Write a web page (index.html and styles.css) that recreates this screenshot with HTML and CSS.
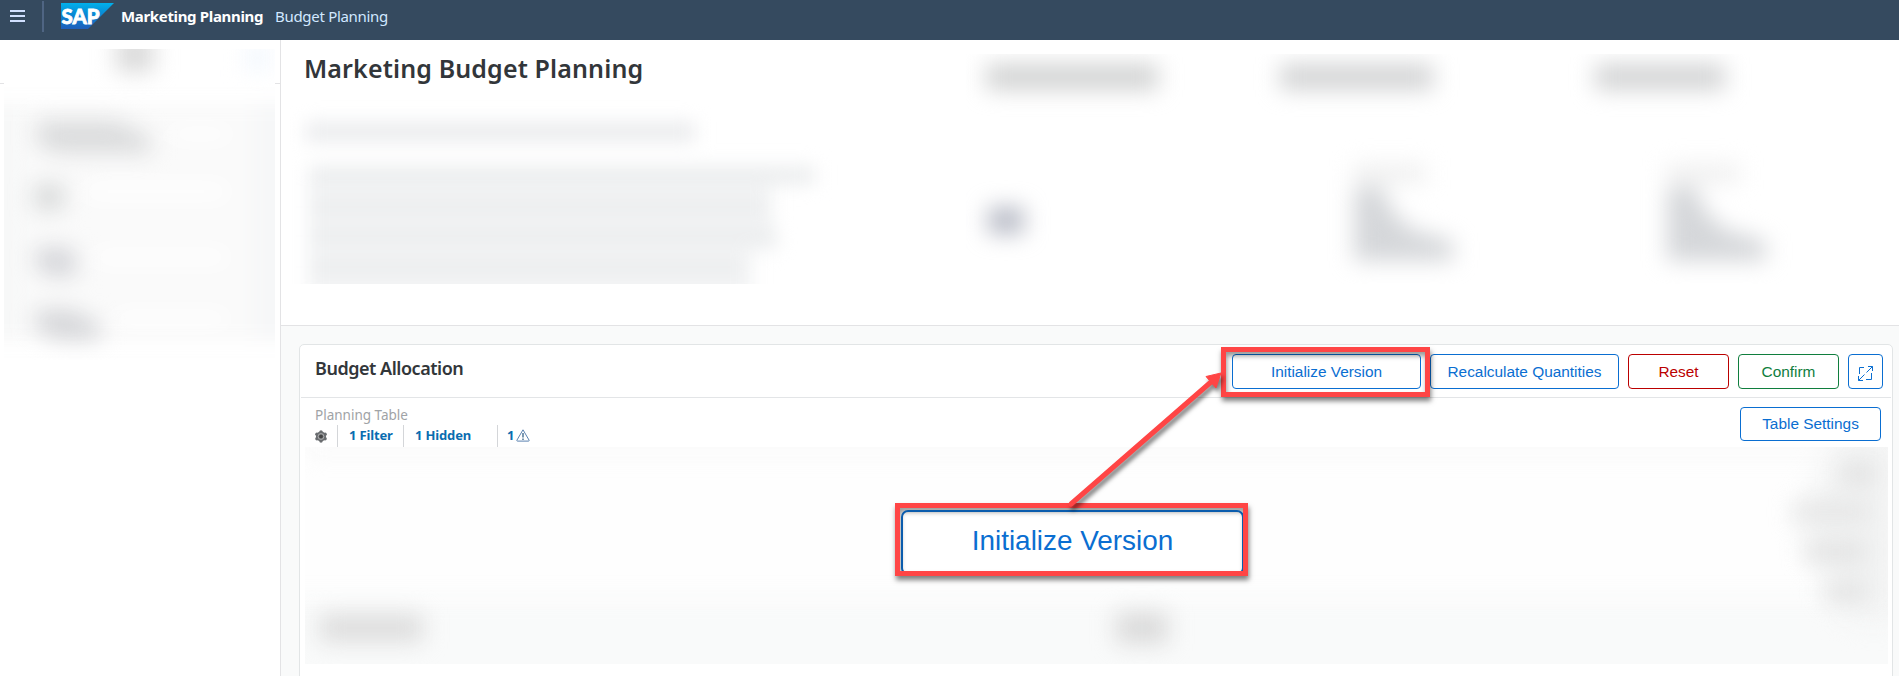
FILE: index.html
```html
<!DOCTYPE html>
<html lang="en">
<head>
<meta charset="utf-8">
<title>Marketing Budget Planning</title>
<link rel="stylesheet" href="styles.css">
</head>
<body>
<header class="shell">
  <svg class="menu" width="15" height="12" viewBox="0 0 15 12"><path d="M0 1h15M0 6h15M0 11h15" stroke="#d1e0ff" stroke-width="2"/></svg>
  <span class="shell-sep"></span>
  <svg class="logo" width="53" height="26" viewBox="0 0 53 26">
    <defs><linearGradient id="sap" x1="0" y1="0" x2="0" y2="1"><stop offset="0" stop-color="#00b1eb"/><stop offset=".5" stop-color="#0b82d0"/><stop offset="1" stop-color="#1e5fbb"/></linearGradient></defs>
    <path d="M0 0h53L27 26H0z" fill="url(#sap)"/>
    <text x="0.5" y="20.5" textLength="38" lengthAdjust="spacingAndGlyphs" class="logo-text">SAP</text>
  </svg>
  <span class="product">Marketing Planning</span>
  <span class="crumb">Budget Planning</span>
</header>
<div class="body">
  <aside class="side">
    <svg class="side-redacted" width="271" height="311" viewBox="4 49 271 311">
      <defs>
        <filter id="b10" x="-100%" y="-200%" width="300%" height="500%"><feGaussianBlur stdDeviation="10"/></filter>
        <filter id="b8" x="-100%" y="-200%" width="300%" height="500%"><feGaussianBlur stdDeviation="11"/></filter>
      </defs>
      <rect x="4" y="49" width="271" height="311" fill="#fff"/>
      <g filter="url(#b10)">
        <rect x="-30" y="104" width="340" height="237" fill="#fafafa"/>
        <rect x="-30" y="104" width="50" height="235" fill="#f7f8f8"/>
        <rect x="254" y="104" width="60" height="235" fill="#f6f7f8"/>
      </g>
      <g filter="url(#b8)">
        <rect x="85" y="184" width="142" height="15" fill="#fff"/>
        <rect x="95" y="250" width="132" height="14" fill="#fff"/>
        <rect x="115" y="312" width="112" height="14" fill="#fff"/>
        <rect x="170" y="128" width="60" height="12" fill="#fff"/>
        <rect x="116" y="36" width="38" height="36" fill="#dadada"/>
        <rect x="245" y="46" width="25" height="24" fill="#f2f7fd"/>
        <path d="M37 121h80l34 17v15H58l-21-8z" fill="#dadbdc"/>
        <rect x="34" y="184" width="30" height="26" fill="#d8dada"/>
        <path d="M36 248h36l4 12v16H52l-16-8z" fill="#d4d5d9"/>
        <path d="M36 310h36l28 15v14H56l-20-10z" fill="#d4d5d8"/>
      </g>
    </svg>
  </aside>
  <main class="main">
    <section class="hero">
      <h1 class="title">Marketing Budget Planning</h1>
      <svg class="hero-redacted" width="1618" height="285" viewBox="281 40 1618 285">
        <defs>
          <clipPath id="c1"><rect x="289" y="99" width="560" height="185"/></clipPath>
          <clipPath id="c2"><rect x="966" y="54" width="925" height="230"/></clipPath>
          <filter id="h7" x="-100%" y="-200%" width="300%" height="500%"><feGaussianBlur stdDeviation="9"/></filter>
          <filter id="h8" x="-100%" y="-200%" width="300%" height="500%"><feGaussianBlur stdDeviation="11"/></filter>
        </defs>
        <g clip-path="url(#c1)">
          <g filter="url(#h7)">
            <rect x="306" y="122" width="389" height="20" fill="#ebecee"/>
            <path d="M308 165h508v20h-44v30l8 34-28 4v50H308z" fill="#f3f4f5"/>
            <path d="M312 176h500M312 207h456M312 236h464M312 267h430" stroke="#e9ebec" stroke-width="12"/>
          </g>
        </g>
        <g clip-path="url(#c2)">
          <g filter="url(#h8)">
            <rect x="986" y="64" width="172" height="26" fill="#d2d3d3"/>
            <rect x="1280" y="64" width="153" height="26" fill="#d3d4d5"/>
            <rect x="1595" y="64" width="130" height="26" fill="#d3d4d5"/>
            <rect x="988" y="207" width="36" height="27" fill="#b9bcc7"/>
            <g id="stack">
              <rect x="1354" y="165" width="72" height="17" fill="#eeeeee"/>
              <path d="M1354 187h29l8 22 20 20 42 12v20h-99z" fill="#d5d7da"/>
            </g>
            <use href="#stack" x="313"/>
          </g>
        </g>
      </svg>
    </section>
    <section class="content">
      <div class="card">
        <div class="card-head">
          <h2 class="card-title">Budget Allocation</h2>
          <div class="actions">
            <button class="btn wide init">Initialize Version
              <svg class="arrow" width="340" height="240" viewBox="890 340 340 240">
                <defs><filter id="sh" x="-20%" y="-20%" width="150%" height="150%"><feDropShadow dx="2" dy="4" stdDeviation="2.2" flood-color="#000" flood-opacity=".5"/></filter></defs>
                <g filter="url(#sh)"><path d="M1071 504L1211 382" stroke="#ff4545" stroke-width="5" stroke-linecap="round"/><path d="M1221 373l-15 3.500 10 11.500z" fill="#ff4545" stroke="#ff4545"/></g>
              </svg>
              <span class="frame small-frame"></span>
              <span class="frame zoom-frame"><span class="zoom-btn">Initialize Version</span></span>
            </button>
            <button class="btn wide">Recalculate Quantities</button>
            <button class="btn mid reset">Reset</button>
            <button class="btn mid confirm">Confirm</button>
            <button class="btn square" aria-label="Full screen"><svg width="15" height="15" viewBox="0 0 15 15" fill="none" stroke="#0a6ed1" stroke-width="1"><path d="M6 1.500H1.500V8M8 13.500h5.500V7M8.500 6.500l6-6M10 .5h4.500V5M6.500 8.500l-6 6M.5 10v4.500H5"/></svg></button>
          </div>
        </div>
        <div class="toolbar">
          <div class="tool-left">
            <div class="caption">Planning Table</div>
            <div class="chips">
              <span class="chip gear"><svg width="12" height="13" viewBox="0 0 12 13"><g fill="#6a6d70"><circle cx="6" cy="6.500" r="5"/><circle cx="6" cy="1.900" r="1.700"/><circle cx="6" cy="11.100" r="1.700"/><circle cx="1.900" cy="4.200" r="1.700"/><circle cx="10.100" cy="4.200" r="1.700"/><circle cx="1.900" cy="8.800" r="1.700"/><circle cx="10.100" cy="8.800" r="1.700"/></g><circle cx="6" cy="6.500" r="2.900" fill="none" stroke="#bbb" stroke-width=".8"/><circle cx="6" cy="6.500" r="1.800" fill="#444"/></svg></span>
              <span class="chip filter">1 Filter</span>
              <span class="chip hidden">1 Hidden</span>
              <span class="chip warn">1<svg width="14" height="13" viewBox="0 0 14 13" fill="none" stroke="#5b82b0"><path d="M7 .8L.9 11.200q-.3.900.6.900h11q.9 0 .6-.9z"/><path d="M7 4v4.500M7 9.500v1.500" stroke="#346187" stroke-width="1.300"/></svg></span>
            </div>
          </div>
          <button class="btn settings">Table Settings</button>
        </div>
        <svg class="table-redacted" width="1583" height="217" viewBox="305 447 1583 217">
          <defs>
            <filter id="t9" x="-100%" y="-200%" width="300%" height="500%"><feGaussianBlur stdDeviation="11"/></filter>
            <filter id="t14" x="-100%" y="-50%" width="300%" height="200%"><feGaussianBlur stdDeviation="14"/></filter>
          </defs>
          <rect x="305" y="447" width="1583" height="217" fill="#fefefe"/>
          <g filter="url(#t9)">
            <rect x="305" y="430" width="1600" height="26" fill="#fafafa"/>
            <rect x="270" y="597" width="1650" height="100" fill="#f9fafa"/>
          </g>
          <path d="M1900 430v190h-50l-30-50-20-50 40-90z" fill="#f2f3f3" filter="url(#t14)"/>
          <g filter="url(#t9)">
            <rect x="1842" y="465" width="32" height="18" fill="#dfdfdf"/>
            <rect x="1793" y="504" width="76" height="16" fill="#e3e3e3"/>
            <rect x="1806" y="543" width="60" height="18" fill="#e1e1e1"/>
            <rect x="1826" y="583" width="40" height="18" fill="#e1e1e1"/>
            <rect x="320" y="614" width="103" height="28" fill="#dddddd"/>
            <rect x="1116" y="612" width="52" height="32" fill="#dbdbdb"/>
          </g>
        </svg>
      </div>
    </section>
  </main>
</div>
</body>
</html>
```
FILE: styles.css
```css
* { box-sizing: border-box; }
body { margin: 0; height: 676px; overflow: hidden; background: #fff; color: #32363a; font-family: "Noto Sans", "Open Sans", sans-serif; }
svg filter { color-interpolation-filters: sRGB; }
.shell { height: 40px; background: #354a5f; display: flex; align-items: center; padding: 0 0 8px 10px; }
.shell-sep { width: 2px; height: 31px; margin-left: 17px; background: #4f6583; }
.logo { margin: 0 7px 0 17px; }
.logo-text { font: 900 21px "Lato", "Open Sans", sans-serif; fill: #fff; stroke: #fff; stroke-width: .8px; }
.product { font-size: 15px; font-weight: 700; color: #fff; letter-spacing: -0.34px; white-space: nowrap; width: 154px; }
.crumb { font-size: 15px; color: #d1e8ff; letter-spacing: -0.3px; white-space: nowrap; }
.body { display: flex; height: 636px; }
.side { width: 281px; border-right: 1px solid #e3e3e5; padding: 9px 0 0 4px; background: linear-gradient(#e3e3e5, #e3e3e5) 0 43px / 100% 1px no-repeat #fff; }
.side-redacted { display: block; }
.main { flex: 1; display: flex; flex-direction: column; min-width: 0; min-height: 0; }
.hero { flex: none; height: 286px; position: relative; border-bottom: 1px solid #e3e3e5; }
.title { margin: 0; padding: 11px 0 0 23px; font-size: 25px; line-height: 34px; font-weight: 600; letter-spacing: .13px; white-space: nowrap; }
.hero-redacted { position: absolute; inset: 0; }
.content { flex: 1; min-height: 0; background: #f9fafa; padding: 18px 6px 0 18px; }
.card { height: 360px; border: 1px solid #e2e5e6; border-radius: 5px; background: #fff; }
.card-head { height: 53px; margin: 0 1px; border-bottom: 1px solid #e3e5e7; display: flex; justify-content: space-between; padding: 9px 8px 0 14px; }
.card-title { margin: 1px 0 0; font-size: 18px; line-height: 26px; font-weight: 600; letter-spacing: -.47px; white-space: nowrap; }
.actions { display: flex; gap: 9px; }
.btn { font: 15.400px "Liberation Sans", Arial, sans-serif; color: #0a6ed1; background: #fff; border: 1px solid currentColor; border-radius: 4px; padding: 0; height: 35px; white-space: nowrap; }
.wide { width: 189px; }
.mid { width: 101px; }
.square { width: 35px; display: flex; align-items: center; justify-content: center; padding-top: 3px; }
.btn.reset { color: #b00; }
.btn.confirm { color: #107e3e; }
.init { position: relative; }
.frame { position: absolute; z-index: 3; border: 5px solid #ff4545; box-shadow: 1px 4px 5px rgba(0,0,0,.5), inset 1px 4px 5px rgba(0,0,0,.4); }
.small-frame { left: -12px; top: -8px; width: 209px; height: 50px; }
.arrow { position: absolute; left: -343px; top: -15px; z-index: 4; pointer-events: none; }
.zoom-frame { left: -338px; top: 148px; width: 353px; height: 73px; background: #fff; overflow: hidden; padding: 2px 0 0 1px; }
.zoom-btn { display: block; width: 343px; height: 65px; border: 2px solid #0a5cad; border-radius: 7px; font-size: 27.900px; line-height: 58px; text-align: center; }
.toolbar { display: flex; justify-content: space-between; height: 49px; padding: 9px 11px 0 15px; }
.settings { width: 141px; height: 34px; }
.caption { font-size: 13.500px; line-height: 18px; color: #a0a3a6; margin-top: -1px; }
.chips { display: flex; margin-top: 1px; font-size: 13px; line-height: 20px; font-weight: 700; letter-spacing: -.15px; color: #0a6cb0; }
.chip { height: 22px; border-right: 1px solid #d4d6d9; white-space: nowrap; }
.gear { width: 23px; padding-top: 5px; line-height: 0; }
.filter { width: 66px; padding-left: 11px; }
.hidden { width: 94px; padding-left: 11px; }
.warn { border: 0; padding-left: 9px; display: flex; }
.warn svg { margin: 4px 0 0 2px; }
.table-redacted { display: block; margin-left: 5px; }
```
